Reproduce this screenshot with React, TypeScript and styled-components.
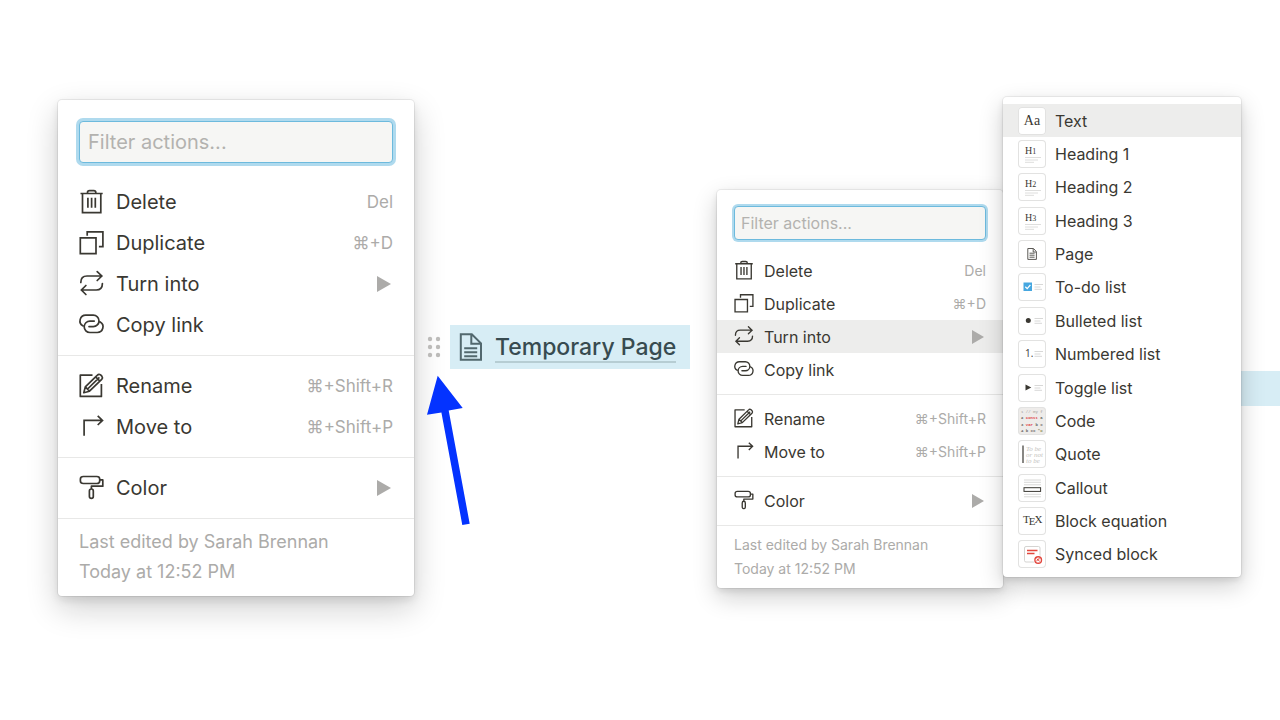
import React from "react";
import styled, { createGlobalStyle, css } from "styled-components";

const ink = "#3a3832";
const muted = "#acaba9";
const highlight = "#d7edf5";

const GlobalStyle = createGlobalStyle`
  *, *::before, *::after { box-sizing: border-box; }
  body {
    margin: 0;
    background: #fff;
    color: ${ink};
    font-family: Inter, "Liberation Sans", sans-serif;
  }
  button, input { font-family: inherit; color: inherit; }
`;

const Page = styled.main`
  display: grid;
  grid-template-columns: minmax(0, 356fr) minmax(0, 303fr) minmax(0, 286fr) minmax(0, 238fr) minmax(0, 39fr);
  align-items: start;
  min-height: 100vh;
  padding-left: 58px;
  overflow: hidden;
`;

type Size = "large" | "small";

const sizes = {
  large: {
    top: 100, inset: 21, padTop: 21, text: 20, hint: 17, note: 18, row: 41, field: 42, fieldGap: 9,
    ring: 3, icon: 24, gap: 13, before: 9, after: 10, noteLine: 30, notePad: "8px 21px 9px", arrow: 14,
  },
  small: {
    top: 190, inset: 17, padTop: 16, text: 16, hint: 14, note: 14, row: 33, field: 34, fieldGap: 7,
    ring: 2, icon: 19, gap: 11, before: 7, after: 8, noteLine: 24, notePad: "7px 17px", arrow: 12,
  },
};

const floating = css`
  position: relative;
  z-index: 1;
  background: #fff;
  border-radius: 4px;
`;

const MenuPanel = styled.section<{ $size: Size }>`
  ${floating}
  margin-top: ${(p) => sizes[p.$size].top}px;
  padding-top: ${(p) => sizes[p.$size].padTop}px;
  box-shadow: ${(p) =>
    p.$size === "large"
      ? "0 0 0 1px rgba(15,15,15,.07), 0 4px 8px rgba(15,15,15,.1), 0 12px 32px rgba(15,15,15,.2)"
      : "0 0 0 1px rgba(15,15,15,.06), 0 3px 6px rgba(15,15,15,.1), 0 9px 24px rgba(15,15,15,.2)"};
`;

const FieldWrap = styled.div<{ $size: Size }>`
  display: flex;
  padding: 0 ${(p) => sizes[p.$size].inset}px;
  margin-bottom: ${(p) => sizes[p.$size].fieldGap}px;
`;

const FilterInput = styled.input<{ $size: Size }>`
  width: 100%;
  height: ${(p) => sizes[p.$size].field}px;
  padding: 0 ${(p) => (p.$size === "large" ? 8 : 6)}px;
  border: 1px solid #6dbadd;
  border-radius: 4px;
  outline: none;
  background: #f6f6f4;
  box-shadow: 0 0 0 ${(p) => sizes[p.$size].ring}px #afdaee;
  font-size: ${(p) => sizes[p.$size].text}px;
  &::placeholder { color: #b3b2af; opacity: 1; }
`;

const Group = styled.div<{ $size: Size }>`
  padding-top: ${(p) => sizes[p.$size].before}px;
  padding-bottom: ${(p) => sizes[p.$size].after}px;
  border-bottom: 1px solid #e8e8e7;
`;

const MenuItem = styled.button<{ $size: Size; $active?: boolean }>`
  display: flex;
  align-items: center;
  gap: ${(p) => sizes[p.$size].gap}px;
  width: 100%;
  height: ${(p) => sizes[p.$size].row}px;
  padding: 0 ${(p) => sizes[p.$size].inset}px;
  border: 0;
  background: ${(p) => (p.$active ? "#ededec" : "transparent")};
  font-size: ${(p) => sizes[p.$size].text}px;
  text-align: left;
  white-space: nowrap;
  cursor: pointer;
`;

const ItemIcon = styled.svg<{ $size: Size }>`
  flex: none;
  width: ${(p) => sizes[p.$size].icon}px;
  height: ${(p) => sizes[p.$size].icon}px;
  overflow: visible;
  fill: none;
  stroke: ${ink};
  stroke-width: 1.7;
`;

const Hint = styled.span<{ $size: Size }>`
  margin-left: auto;
  color: ${muted};
  font-size: ${(p) => sizes[p.$size].hint}px;
`;

const SubArrow = styled.svg<{ $size: Size }>`
  flex: none;
  width: ${(p) => sizes[p.$size].arrow}px;
  height: ${(p) => sizes[p.$size].arrow + 2}px;
  margin-left: auto;
  margin-right: 2px;
  fill: ${muted};
`;

const Note = styled.p<{ $size: Size }>`
  margin: 0;
  padding: ${(p) => sizes[p.$size].notePad};
  color: ${muted};
  font-size: ${(p) => sizes[p.$size].note}px;
  line-height: ${(p) => sizes[p.$size].noteLine}px;
  white-space: nowrap;
`;

const Middle = styled.div`
  position: relative;
  z-index: 2;
  padding: 325px 27px 0 13px;
`;

const Block = styled.div`
  display: flex;
  align-items: center;
  gap: 9px;
`;

const DragHandle = styled.button`
  display: flex;
  padding: 0;
  border: 0;
  background: none;
  cursor: grab;
`;

const PageBlock = styled.a`
  flex: 1;
  display: flex;
  align-items: center;
  gap: 13px;
  height: 44px;
  padding-left: 9px;
  background: ${highlight};
  color: #374b50;
  text-decoration: none;
`;

const PageTitle = styled.span`
  padding-top: 3px;
  border-bottom: 2px solid #b6cdd3;
  font-size: 23px;
  font-weight: 500;
  line-height: 27px;
  white-space: nowrap;
`;

const Pointer = styled.svg`
  display: block;
  margin-top: 6px;
  fill: #0433ff;
`;

const SubMenu = styled.section`
  ${floating}
  display: grid;
  grid-auto-rows: 1fr;
  min-height: 480px;
  margin-top: 97px;
  padding: 7px 0 6px;
  box-shadow: 0 0 0 1px rgba(15,15,15,.06), 0 3px 6px rgba(15,15,15,.1), 0 9px 24px rgba(15,15,15,.2);
`;

const BlockOption = styled.button<{ $active?: boolean }>`
  display: flex;
  align-items: center;
  gap: 9px;
  padding: 0 15px;
  border: 0;
  background: ${(p) => (p.$active ? "#ededec" : "transparent")};
  font-size: 16px;
  text-align: left;
  white-space: nowrap;
  cursor: pointer;
`;

const Thumb = styled.svg<{ $tinted?: boolean }>`
  flex: none;
  width: 28px;
  height: 28px;
  border-radius: 4px;
  background: ${(p) => (p.$tinted ? "#eeecea" : "#fff")};
  box-shadow: inset 0 0 0 1px #e2e2e1;
`;

const Strip = styled.div`
  height: 35px;
  margin-top: 371px;
  background: ${highlight};
`;

const icons: Record<string, React.ReactNode> = {
  Delete: <path d="M1 3.5H23.2M8 3.5V2.6Q8 .6 10 .6H14.3Q16.3 .6 16.3 2.6V3.5M3 3.5V22.6H21.3V3.5M8.4 7.7V17.8M12.1 7.7V17.8M15.8 7.7V17.8" />,
  Duplicate: <path d="M.8 6.9H16.5V22.6H.8ZM7.7 4.7V.9H23.4V15.7H19.4" />,
  "Turn into": <path strokeLinecap="round" d="M1.3 10.5Q1.3 4 7.5 4H22.3M17.7 -.4 22.3 4 17.7 8.5M22.9 11.5Q22.9 18 16.7 18H1.9M6.4 13.5 1.9 18 6.4 22.5" />,
  "Copy link": <path strokeLinecap="round" d="M3.3 12.8A5.7 5.7 0 0 1 6.2 2.2H13.8a5.7 5.7 0 0 1 0 11.4H9.5M20.7 8.9A5.7 5.7 0 0 1 17.8 19.5H10.4a5.7 5.7 0 0 1 0-11.4H14.7" />,
  Rename: <path strokeLinejoin="round" d="M13 1.1H.8V22.4H21.9V10M4.3 18.7 5.8 12.9 17.9 1.1Q19.3-.4 21.1.9L22.3 2.1Q23.6 3.8 22.2 5.4L10 17.2ZM5.8 12.9 10 17.2M8.1 15 19.9 3.4M16.1 2.9 20.4 7.2" />,
  "Move to": <path d="M4.6 20.8V5.4H23.2M18.2.9 23 5.4 18.2 10" />,
  Color: <path strokeLinejoin="round" d="M3.8.5H17.3Q20.2.5 20.2 3V5Q20.2 7.5 17.3 7.5H3.8Q.9 7.5.9 5V3Q.9.5 3.8.5ZM20.2 3.9H23.3V10.2H11.9V13M11.9 13Q13.8 13 13.8 15V20.5Q13.8 22.3 11.9 22.3T9.9 20.5V15Q9.9 13 11.9 13Z" />,
};

type Action = { label: string; hint?: string };

const groups: Action[][] = [
  [{ label: "Delete", hint: "Del" }, { label: "Duplicate", hint: "⌘+D" }, { label: "Turn into" }, { label: "Copy link", hint: "" }],
  [{ label: "Rename", hint: "⌘+Shift+R" }, { label: "Move to", hint: "⌘+Shift+P" }],
  [{ label: "Color" }],
];

function ActionMenu({ size, active }: { size: Size; active?: string }) {
  return (
    <MenuPanel $size={size} aria-label="Block actions">
      <FieldWrap $size={size}>
        <FilterInput $size={size} type="text" aria-label="Filter actions" placeholder="Filter actions..." />
      </FieldWrap>
      {groups.map((group) => (
        <Group $size={size} key={group[0].label}>
          {group.map(({ label, hint }) => (
            <MenuItem $size={size} $active={label === active} key={label} type="button">
              <ItemIcon $size={size} viewBox="-0.5 0 24 24" aria-hidden="true">{icons[label]}</ItemIcon>
              {label}
              {hint && <Hint $size={size}>{hint}</Hint>}
              {hint === undefined && (
                <SubArrow $size={size} viewBox="0 0 14 16" preserveAspectRatio="none" aria-hidden="true">
                  <path d="M0 0 14 8 0 16Z" />
                </SubArrow>
              )}
            </MenuItem>
          ))}
        </Group>
      ))}
      <Note $size={size}>
        Last edited by Sarah Brennan
        <br />
        Today at 12:52 PM
      </Note>
    </MenuPanel>
  );
}

const serif = '"Liberation Serif", serif';
const mono = '"Liberation Mono", monospace';

const heading = (n: number) => (
  <>
    <text x="7" y="14" fontFamily={serif} fontSize="10" fill={ink}>H<tspan fontSize="8">{n}</tspan></text>
    <path d="M7 17.5H23M7 20H20M7 22.3H16" stroke="#dededd" />
  </>
);

const listLines = <path d="M16.5 11.5H25M16.5 14H22.5M16.5 16.3H24" stroke="#d8d8d7" />;

const options: { label: string; art: React.ReactNode }[] = [
  { label: "Text", art: <text x="14" y="18" textAnchor="middle" fontFamily={serif} fontSize="14" fill={ink}>Aa</text> },
  { label: "Heading 1", art: heading(1) },
  { label: "Heading 2", art: heading(2) },
  { label: "Heading 3", art: heading(3) },
  { label: "Page", art: <path d="M9.8 8.5H15.5L18.4 11.6V19.4H9.8ZM15.2 8.8V12H18.2M11.5 13.2H16.6M11.5 15.2H16.6M11.5 17.2H16.6" fill="none" stroke="#5c5a56" /> },
  { label: "To-do list", art: <><rect x="5.5" y="9.5" width="8.5" height="8.5" fill="#46a7e0" /><path d="M7.3 13.7 9.2 15.6 12.4 11.8" fill="none" stroke="#fff" strokeWidth="1.3" />{listLines}</> },
  { label: "Bulleted list", art: <><circle cx="10.3" cy="13.6" r="2.5" fill={ink} />{listLines}</> },
  { label: "Numbered list", art: <><text x="7" y="17" fontFamily='"Open Sans", sans-serif' fontSize="10" fill={ink}>1.</text>{listLines}</> },
  { label: "Toggle list", art: <><path d="M7.5 10.4 13.3 13.4 7.5 16.4Z" fill={ink} />{listLines}</> },
  {
    label: "Code",
    art: (
      <g fontFamily={mono} fontSize="4" fontWeight="700" fill="#65625e">
        <text x="3" y="6" fill="#b5b2ae">1 // My f</text>
        <text x="3" y="12">2 <tspan fill="#df3c45">const</tspan> a</text>
        <text x="3" y="19">3 <tspan fill="#df3c45">var</tspan> b =</text>
        <text x="3" y="25">4 b == <tspan fill="#8b8751">"o</tspan></text>
      </g>
    ),
  },
  {
    label: "Quote",
    art: (
      <>
        <path d="M5 5.5V23" stroke={ink} strokeWidth="1.2" />
        <g fontFamily={serif} fontSize="7" fontStyle="italic" fill="#c4c3c0">
          <text x="8" y="11">To be</text>
          <text x="8" y="17">or not</text>
          <text x="8" y="23">to be</text>
        </g>
      </>
    ),
  },
  { label: "Callout", art: <><path d="M6 6H23M6 8.3H23M6 10.8H23M6 20.3H23M6 22.8H23" stroke="#d4d4d2" strokeWidth=".9" /><rect x="6" y="13.7" width="16.6" height="3.7" fill="#fff" stroke={ink} /></> },
  { label: "Block equation", art: <text x="5" y="16" fontFamily={serif} fontSize="11" fill={ink}>T<tspan dx="-1" dy="2">E</tspan><tspan dx="-1" dy="-2">X</tspan></text> },
  {
    label: "Synced block",
    art: (
      <>
        <rect x="6.5" y="6.5" width="15.5" height="15.5" rx="1.5" fill="none" stroke="#d5d4d2" />
        <path d="M9 10.5H19.5M9 13.5H16.5" stroke="#e2473e" strokeWidth="1.4" />
        <circle cx="20.2" cy="20" r="4.8" fill="#fff" />
        <circle cx="20.2" cy="20" r="3.3" fill="none" stroke="#e2473e" strokeWidth="1.4" />
        <path d="M18.7 18.7 21.7 21.3M18.7 21.3Q19.2 18.7 21.7 18.7" fill="none" stroke="#e2473e" />
      </>
    ),
  },
];

export default function App() {
  return (
    <>
      <GlobalStyle />
      <Page>
        <ActionMenu size="large" />
        <Middle>
          <Block>
            <DragHandle type="button" aria-label="Drag block">
              <svg width="14" height="24" fill="#bcbbb9" aria-hidden="true">
                {[3, 11].map((x) => [4, 12, 20].map((y) => <circle key={`${x}-${y}`} cx={x} cy={y} r="2.2" />))}
              </svg>
            </DragHandle>
            <PageBlock href="#temporary-page">
              <svg width="23" height="28" fill="none" stroke="#52686e" strokeWidth="2" aria-hidden="true">
                <path d="M1.8 1.2H12.8L22 10.3V26.8H1.8ZM12.3 1.5V10.7H21.7M5.2 15.2H18.2M5.2 19.2H18.2M5.2 23.2H18.2" />
              </svg>
              <PageTitle>Temporary Page</PageTitle>
            </PageBlock>
          </Block>
          <Pointer width="44" height="151" aria-hidden="true">
            <path d="M10.7.7 35.7 33 21.7 35.6 42.7 148.7 35.3 150 14.4 37.4 0 39.7Z" />
          </Pointer>
        </Middle>
        <ActionMenu size="small" active="Turn into" />
        <SubMenu aria-label="Turn into">
          {options.map(({ label, art }) => (
            <BlockOption key={label} type="button" $active={label === "Text"}>
              <Thumb viewBox="0 0 28 28" $tinted={label === "Code"} aria-hidden="true">{art}</Thumb>
              {label}
            </BlockOption>
          ))}
        </SubMenu>
        <Strip />
      </Page>
    </>
  );
}
